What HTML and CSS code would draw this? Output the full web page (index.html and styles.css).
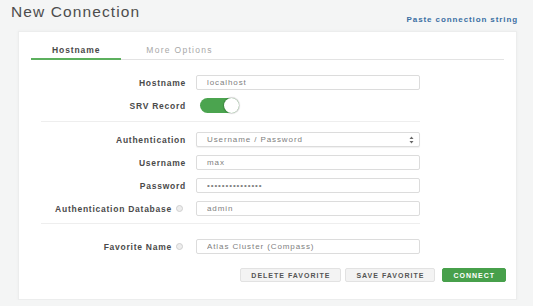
FILE: index.html
```html
<!DOCTYPE html>
<html lang="en">
<head>
    <meta charset="UTF-8">
    <meta name="viewport" content="width=device-width, initial-scale=1.0">
    <title>New Connection</title>
    <link rel="stylesheet" href="styles.css">
</head>
<body>
    <div class="header">
        <h2>New Connection</h2>
        <a class="paste-link" href="#">Paste connection string</a>
    </div>

    <div class="card">
        <div class="tabs">
            <div class="tab active">Hostname</div>
            <div class="tab">More Options</div>
        </div>

        <form class="form">
            <div class="form-row">
                <label>Hostname</label>
                <input class="field" type="text" value="localhost">
            </div>
            <div class="form-row">
                <label>SRV Record</label>
                <div class="toggle on"><span class="knob"></span></div>
            </div>

            <div class="divider"></div>

            <div class="form-row">
                <label>Authentication</label>
                <div class="field select">
                    Username / Password
                    <svg class="arrows" width="5" height="8" viewBox="0 0 5 8">
                        <path d="M2.5 0.5 L4.5 3 L0.5 3 Z" fill="#666"/>
                        <path d="M2.5 7.5 L4.5 5 L0.5 5 Z" fill="#666"/>
                    </svg>
                </div>
            </div>
            <div class="form-row">
                <label>Username</label>
                <input class="field" type="text" value="max">
            </div>
            <div class="form-row">
                <label>Password</label>
                <input class="field" type="password" value="secretpassword1">
            </div>
            <div class="form-row">
                <label>Authentication Database <span class="info"></span></label>
                <input class="field" type="text" value="admin">
            </div>

            <div class="divider lower"></div>

            <div class="form-row">
                <label>Favorite Name <span class="info"></span></label>
                <input class="field" type="text" value="Atlas Cluster (Compass)">
            </div>

            <div class="actions">
                <button type="button" class="btn">Delete Favorite</button>
                <button type="button" class="btn save">Save Favorite</button>
                <button type="button" class="btn btn-connect">Connect</button>
            </div>
        </form>
    </div>
</body>
</html>
```

FILE: styles.css
```css
body {
    font-family: 'Liberation Sans', Arial, sans-serif;
    background-color: #f4f5f5;
    margin: 0;
    padding: 0;
    color: #494949;
}
.header {
    display: flex;
    justify-content: space-between;
    align-items: flex-start;
    height: 31px;
    padding: 0 15px 0 11px;
}
.header h2 {
    margin: 3px 0 0;
    font-size: 15.5px;
    line-height: 18px;
    font-weight: normal;
    letter-spacing: 1.1px;
    color: #4d4d4d;
}
.paste-link {
    margin-top: 15px;
    font-size: 8px;
    line-height: 9px;
    font-weight: bold;
    letter-spacing: 0.9px;
    color: #3a6fa3;
    text-decoration: none;
}
.card {
    margin-left: 18px;
    background: white;
    padding: 12px 12px 17px;
    border: 1px solid #eceded;
    box-sizing: border-box;
    width: 499px;
    box-shadow: 0 0 3px rgba(0,0,0,0.04);
}
.tabs {
    display: flex;
    border-bottom: 1px solid #e3e3e3;
}
.tab {
    padding: 0 21px 2px 25px;
    font-size: 8.5px;
    line-height: 12px;
    letter-spacing: 1.3px;
    color: #a8a8a8;
    border-bottom: 2px solid transparent;
    margin-bottom: -1px;
}
.tab.active {
    padding: 0 21px 2px;
    letter-spacing: 0.9px;
    font-weight: bold;
    color: #494949;
    border-bottom-color: #5cb05e;
}
.form {
    padding: 15px 0 0 10px;
}
.form-row {
    display: grid;
    grid-template-columns: 145px 224px;
    column-gap: 10px;
    align-items: center;
    height: 15px;
    margin-bottom: 8px;
}
.form-row label {
    text-align: right;
    font-size: 8.5px;
    font-weight: bold;
    letter-spacing: 0.75px;
    color: #4a4a4a;
    display: flex;
    justify-content: flex-end;
    align-items: center;
    gap: 4px;
    white-space: nowrap;
}
.field {
    height: 15px;
    box-sizing: border-box;
    border: 1px solid #dcdcdc;
    border-radius: 2px;
    padding: 0 10px;
    font-family: 'Liberation Sans', Arial, sans-serif;
    font-size: 8px;
    letter-spacing: 0.9px;
    color: #808080;
    background: white;
    outline: none;
    width: 224px;
}
.select {
    display: flex;
    align-items: center;
    justify-content: space-between;
    padding-right: 5px;
    box-shadow: 0 1px 1px rgba(0,0,0,0.06);
}
.toggle {
    width: 39px;
    height: 15px;
    border-radius: 8px;
    background: #4ba44f;
    position: relative;
    margin-left: 4px;
}
.toggle .knob {
    position: absolute;
    right: 0;
    top: 0;
    width: 15px;
    height: 15px;
    border-radius: 50%;
    background: white;
    box-shadow: 0 0 1px 1px rgba(0,0,0,0.18);
}
.info {
    display: inline-block;
    width: 5px;
    height: 5px;
    border: 1px solid #cfcfcf;
    background: #ededed;
    border-radius: 50%;
    margin-right: 3px;
}
.divider {
    border-top: 1px solid #eeeeee;
    width: 379px;
    margin: 1px 0 10px;
}
.divider.lower {
    margin: -1px 0 15px;
}
.actions {
    display: flex;
    justify-content: flex-end;
    gap: 4px;
    margin-top: 14px;
    margin-right: -2px;
}
.btn {
    height: 14px;
    padding: 0 10px;
    border: 1px solid #e2e2e2;
    border-radius: 2px;
    background: #f3f3f3;
    font-family: 'Liberation Sans', Arial, sans-serif;
    font-size: 7px;
    font-weight: bold;
    letter-spacing: 1px;
    text-transform: uppercase;
    color: #555;
}
.btn.save {
    margin-right: 3px;
}
.btn-connect {
    background: #47a04b;
    border-color: #47a04b;
    color: white;
    padding: 0 10px;
}
```
